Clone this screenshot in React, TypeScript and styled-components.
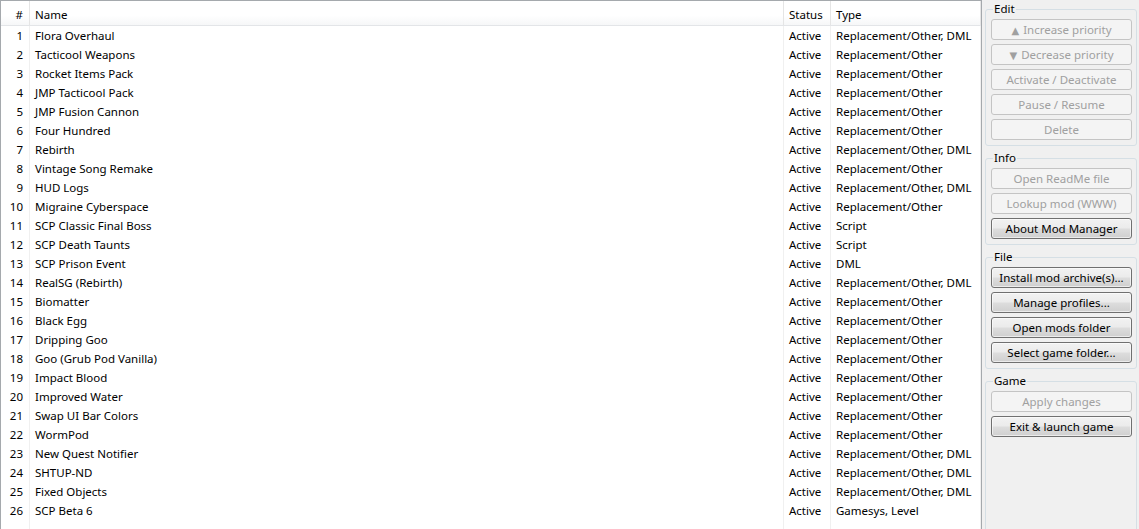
import React from "react";
import styled, { createGlobalStyle } from "styled-components";

const Global = createGlobalStyle`
  html, body { margin: 0; padding: 0; }
  body {
    background: #f0f0f0;
    font-family: "Noto Sans", "Open Sans", "Liberation Sans", sans-serif;
    font-size: 11.5px;
    color: #000;
    overflow: hidden;
  }
`;

type Mod = { name: string; type: string };

const mods: Mod[] = [
  { name: "Flora Overhaul", type: "Replacement/Other, DML" },
  { name: "Tacticool Weapons", type: "Replacement/Other" },
  { name: "Rocket Items Pack", type: "Replacement/Other" },
  { name: "JMP Tacticool Pack", type: "Replacement/Other" },
  { name: "JMP Fusion Cannon", type: "Replacement/Other" },
  { name: "Four Hundred", type: "Replacement/Other" },
  { name: "Rebirth", type: "Replacement/Other, DML" },
  { name: "Vintage Song Remake", type: "Replacement/Other" },
  { name: "HUD Logs", type: "Replacement/Other, DML" },
  { name: "Migraine Cyberspace", type: "Replacement/Other" },
  { name: "SCP Classic Final Boss", type: "Script" },
  { name: "SCP Death Taunts", type: "Script" },
  { name: "SCP Prison Event", type: "DML" },
  { name: "RealSG (Rebirth)", type: "Replacement/Other, DML" },
  { name: "Biomatter", type: "Replacement/Other" },
  { name: "Black Egg", type: "Replacement/Other" },
  { name: "Dripping Goo", type: "Replacement/Other" },
  { name: "Goo (Grub Pod Vanilla)", type: "Replacement/Other" },
  { name: "Impact Blood", type: "Replacement/Other" },
  { name: "Improved Water", type: "Replacement/Other" },
  { name: "Swap UI Bar Colors", type: "Replacement/Other" },
  { name: "WormPod", type: "Replacement/Other" },
  { name: "New Quest Notifier", type: "Replacement/Other, DML" },
  { name: "SHTUP-ND", type: "Replacement/Other, DML" },
  { name: "Fixed Objects", type: "Replacement/Other, DML" },
  { name: "SCP Beta 6", type: "Gamesys, Level" },
];

const Window = styled.div`
  display: flex;
  height: 529px;
  overflow: hidden;
`;

const List = styled.div`
  width: 980px;
  height: 540px;
  flex: none;
  background: #fff;
  border: 1px solid #a5a9ad;
  display: flex;
  flex-direction: column;
`;

const cols = "29px 754px 47px 1fr";

const HeaderRow = styled.div`
  display: grid;
  grid-template-columns: ${cols};
  height: 24px;
  border-bottom: 1px solid #e3e5e8;
  background: linear-gradient(#ffffff, #ffffff 60%, #f6f7f8);
`;

const HeaderCell = styled.div<{ $right?: boolean }>`
  display: flex;
  align-items: center;
  padding-top: 2px;
  justify-content: ${(p) => (p.$right ? "flex-end" : "flex-start")};
  padding-left: ${(p) => (p.$right ? "0" : "5px")};
  padding-right: ${(p) => (p.$right ? "6px" : "0")};
  border-right: 1px solid #e5e5e5;
  white-space: nowrap;
`;

const Row = styled.div`
  display: grid;
  grid-template-columns: ${cols};
  height: 19px;
`;

const Filler = styled.div`
  display: grid;
  grid-template-columns: ${cols};
  flex: 1;
`;

const Cell = styled.div<{ $right?: boolean }>`
  display: flex;
  align-items: center;
  justify-content: ${(p) => (p.$right ? "flex-end" : "flex-start")};
  padding: ${(p) => (p.$right ? "0 6px 0 0" : "0 0 0 5px")};
  border-right: 1px solid #f0f0f0;
  white-space: nowrap;
  overflow: hidden;
`;

const Panel = styled.div`
  flex: 1;
  display: flex;
  flex-direction: column;
  padding: 1px 2px 0 3px;
  gap: 4px;
`;

const Group = styled.fieldset<{ $grow?: boolean }>`
  margin: 0;
  padding: 2px 4px 5px 5px;
  border: 1px solid #d5dfe5;
  border-radius: 3px;
  display: flex;
  flex-direction: column;
  gap: 4px;
  min-width: 0;
  ${(p) => (p.$grow ? "flex: 1; margin-bottom: -10px;" : "")}
`;

const Legend = styled.legend`
  padding: 0 1px;
  margin-left: 2px;
  line-height: 16px;
  font-size: 11.5px;
`;

const Arrow = styled.span`
  font-family: "DejaVu Sans", sans-serif;
  font-size: 10px;
  margin-right: 4px;
`;

const Button = styled.button`
  height: 21px;
  width: 100%;
  margin: 0;
  padding: 0;
  font-family: inherit;
  font-size: 11.5px;
  line-height: 19px;
  border-radius: 3px;
  color: #000;
  border: 1px solid #707070;
  background: linear-gradient(#f2f2f2 0%, #ebebeb 48%, #dddddd 52%, #cfcfcf 100%);
  box-shadow: inset 0 0 0 1px rgba(255, 255, 255, 0.6);
  &:disabled {
    color: #a0a0a0;
    border-color: #c4c4c4;
    background: #f4f4f4;
    box-shadow: none;
  }
`;

export default function App() {
  return (
    <>
      <Global />
      <Window>
        <List>
          <HeaderRow>
            <HeaderCell $right>#</HeaderCell>
            <HeaderCell>Name</HeaderCell>
            <HeaderCell>Status</HeaderCell>
            <HeaderCell>Type</HeaderCell>
          </HeaderRow>
          {mods.map((m, i) => (
            <Row key={i}>
              <Cell $right>{i + 1}</Cell>
              <Cell>{m.name}</Cell>
              <Cell>Active</Cell>
              <Cell>{m.type}</Cell>
            </Row>
          ))}
          <Filler>
            <Cell />
            <Cell />
            <Cell />
            <Cell />
          </Filler>
        </List>
        <Panel>
          <Group>
            <Legend>Edit</Legend>
            <Button disabled>
              <Arrow>▲</Arrow>Increase priority
            </Button>
            <Button disabled>
              <Arrow>▼</Arrow>Decrease priority
            </Button>
            <Button disabled>Activate / Deactivate</Button>
            <Button disabled>Pause / Resume</Button>
            <Button disabled>Delete</Button>
          </Group>
          <Group>
            <Legend>Info</Legend>
            <Button disabled>Open ReadMe file</Button>
            <Button disabled>Lookup mod (WWW)</Button>
            <Button>About Mod Manager</Button>
          </Group>
          <Group>
            <Legend>File</Legend>
            <Button>Install mod archive(s)...</Button>
            <Button>Manage profiles...</Button>
            <Button>Open mods folder</Button>
            <Button>Select game folder...</Button>
          </Group>
          <Group $grow>
            <Legend>Game</Legend>
            <Button disabled>Apply changes</Button>
            <Button>Exit &amp; launch game</Button>
          </Group>
        </Panel>
      </Window>
    </>
  );
}
